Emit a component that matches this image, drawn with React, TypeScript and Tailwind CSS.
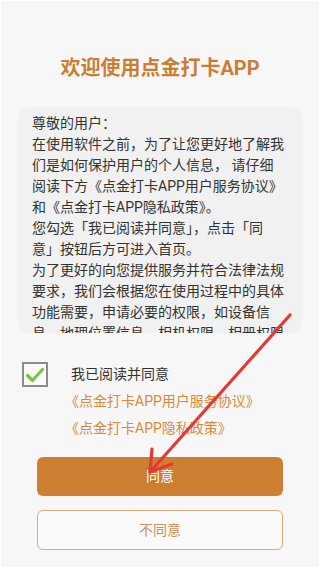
import React from 'react';

const FONT = { fontFamily: 'Roboto, "Noto Sans CJK SC", sans-serif' };

// lines as broken in the original dialog
const NOTICE = [
  '尊敬的用户：',
  '在使用软件之前，为了让您更好地了解我',
  '们是如何保护用户的个人信息， 请仔细',
  '阅读下方《点金打卡APP用户服务协议》',
  '和《点金打卡APP隐私政策》。',
  '您勾选「我已阅读并同意」，点击「同',
  '意」按钮后方可进入首页。',
  '为了更好的向您提供服务并符合法律法规',
  '要求，我们会根据您在使用过程中的具体',
  '功能需要，申请必要的权限，如设备信',
  '息、地理位置信息、相机权限、相册权限',
];

const App = () => {
  return (
    <div
      className="relative w-[320px] h-[568px] overflow-hidden bg-[#f7f7f7] border border-white flex flex-col"
      style={FONT}
    >
      {/* title */}
      <div className="mt-[53px] h-[28px] text-center text-[20px] leading-[28px] font-bold text-[#cd7d33]">
        欢迎使用点金打卡APP
      </div>

      {/* notice box */}
      <div className="mt-[25px] mx-[17px] h-[226px] rounded-[10px] bg-[#f1f1f1] overflow-hidden pl-[14px] pr-[6px] pt-[6px] text-[14px] leading-[21px] text-[#333333] whitespace-pre">
        {NOTICE.map((line, i) => (
          <div key={i}>{line}</div>
        ))}
      </div>

      {/* agree checkbox */}
      <div className="mt-[29px] flex items-center h-[25px]">
        <div className="ml-[21px] w-[26px] h-[25px] border-2 border-[#8c8c8c] bg-[#fbfbfb] flex items-center justify-center">
          <svg width="18" height="16" viewBox="0 0 18 16">
            <path
              d="M1.5 8.5 L6.5 13.5 L16.5 2.5"
              fill="none"
              stroke="#7cc440"
              strokeWidth="3.2"
              strokeLinecap="round"
              strokeLinejoin="round"
            />
          </svg>
        </div>
        <span className="ml-[23px] text-[14px] text-[#333333]">我已阅读并同意</span>
      </div>

      <div className="mt-[4px] ml-[64px] text-[14px] leading-[21px] text-[#d9893a]">
        《点金打卡APP用户服务协议》
      </div>
      <div className="mt-[6px] ml-[64px] text-[14px] leading-[21px] text-[#d9893a]">
        《点金打卡APP隐私政策》
      </div>

      {/* buttons */}
      <button className="mt-[18px] mx-[36px] h-[39px] rounded-[6px] bg-[#cc7e31] text-white text-[14px]">
        同意
      </button>
      <button className="mt-[14px] mx-[36px] h-[40px] rounded-[6px] border border-[#e2a877] bg-[#fafafa] text-[#d38e55] text-[14px]">
        不同意
      </button>

      {/* annotation arrow */}
      <svg
        className="absolute left-0 top-0 pointer-events-none"
        width="320"
        height="568"
        viewBox="0 0 320 568"
      >
        <g stroke="#e53935" strokeWidth="3.2" strokeLinecap="round" fill="none">
          <line x1="289" y1="314" x2="149" y2="471" />
          <line x1="149" y1="471" x2="151" y2="448" />
          <line x1="149" y1="471" x2="171" y2="463" />
        </g>
      </svg>
    </div>
  );
};

export default App;
